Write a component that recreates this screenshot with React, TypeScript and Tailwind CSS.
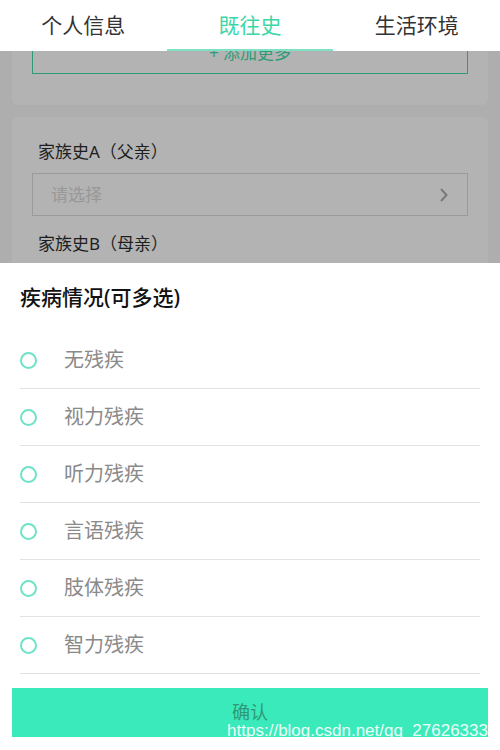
import React from "react";

const font = { fontFamily: '"Noto Sans", "Noto Sans CJK SC", sans-serif' };

const options = ["无残疾", "视力残疾", "听力残疾", "言语残疾", "肢体残疾", "智力残疾"];

const App = () => {
    return (
        <div className="relative w-[500px] h-[750px] overflow-hidden bg-white" style={font}>
            {/* tabs */}
            <div className="relative flex flex-row h-[51px] bg-white">
                <div className="flex-1 flex items-center justify-center text-[21px] text-[#333]">个人信息</div>
                <div className="flex-1 flex items-center justify-center text-[21px] text-[#3cd7a8]">既往史</div>
                <div className="flex-1 flex items-center justify-center text-[21px] text-[#333]">生活环境</div>
                <div className="absolute left-[167px] bottom-0 w-[166px] h-[2px] bg-[#7fe0c4]" />
            </div>

            {/* page behind the mask */}
            <div className="h-[212px] overflow-hidden bg-[#aeaeae] px-3">
                <div className="-mt-[20px] rounded-md bg-[#b3b3b3] px-5 pb-[31px]">
                    <div className="flex items-center justify-center h-[43px] border-[1.5px] border-[#2f9a78] text-[17px] text-[#2f9a78]">
                        + 添加更多
                    </div>
                </div>
                <div className="mt-3 rounded-md bg-[#b3b3b3] px-5 pt-[23px] pb-4">
                    <div className="pl-[6px] text-[17px] text-[#1e1e1e] leading-6">家族史A（父亲）</div>
                    <div className="mt-[9px] flex flex-row items-center justify-between h-[43px] border border-[#9a9a9a] pl-[18px] pr-[18px]">
                        <span className="text-[17px] text-[#989898]">请选择</span>
                        <svg width="10" height="16" viewBox="0 0 10 16">
                            <path d="M2 2 L7.5 8 L2 14" fill="none" stroke="#7a7a7a" strokeWidth="2" />
                        </svg>
                    </div>
                    <div className="mt-4 pl-[6px] text-[17px] text-[#1e1e1e] leading-6">家族史B（母亲）</div>
                </div>
            </div>

            {/* bottom sheet */}
            <div className="bg-white">
                <div className="h-[69px] flex items-center px-5 text-[21px] font-medium text-[#111]">疾病情况(可多选)</div>
                <div className="px-5">
                    {options.map((o) => (
                        <div key={o} className="flex flex-row items-center h-[57px] border-b border-[#e3e3e3]">
                            <span className="w-[17px] h-[17px] rounded-full border-2 border-[#6fe3c7]" />
                            <span className="ml-[27px] text-[20px] text-[#8a8a8a]">{o}</span>
                        </div>
                    ))}
                </div>
                <div className="px-3 mt-[14px]">
                    <div className="flex items-center justify-center h-[49px] bg-[#3aeaba] text-[18px] text-[#2f9878]">确认</div>
                </div>
            </div>

            <div
                className="absolute right-[12px] bottom-[11px] text-[17px] text-white/90 leading-none"
                style={{ fontFamily: '"Liberation Sans", sans-serif' }}
            >
                https://blog.csdn.net/qq_27626333
            </div>
        </div>
    );
};

export default App;
